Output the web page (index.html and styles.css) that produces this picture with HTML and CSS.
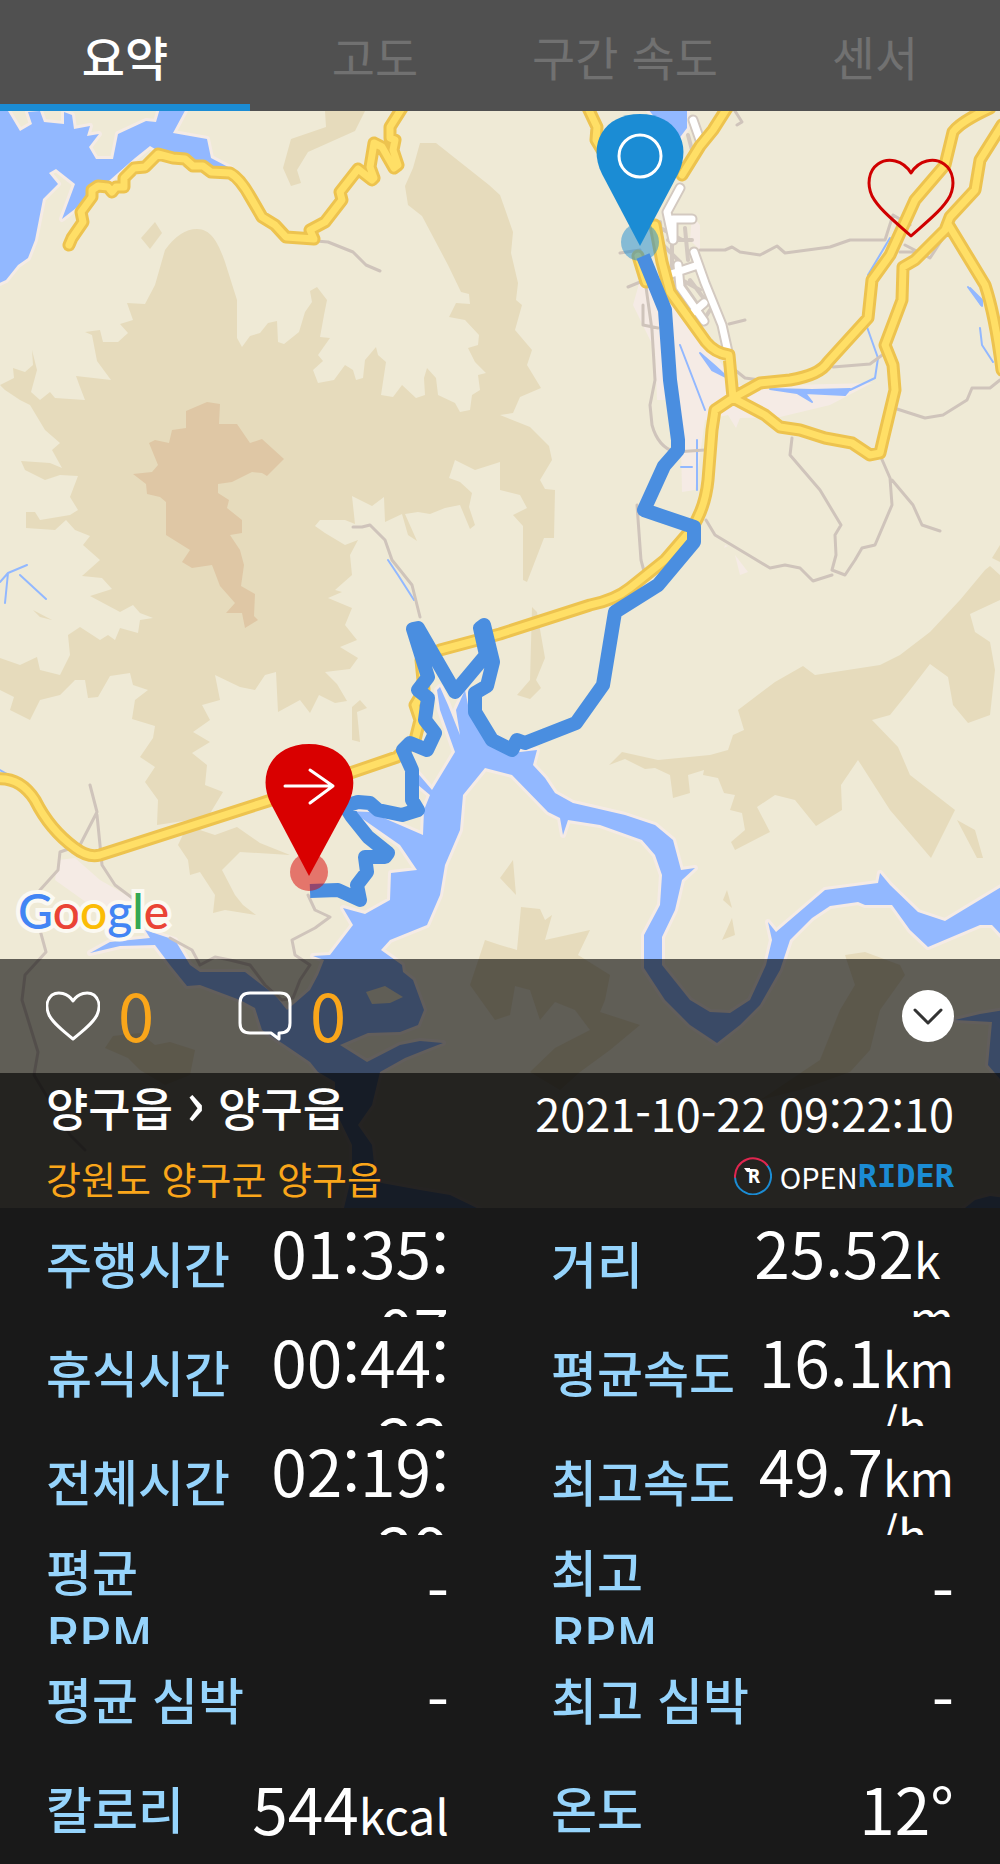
FILE: index.html
```html
<!DOCTYPE html>
<html lang="ko">
<head>
    <meta charset="UTF-8">
    <meta name="viewport" content="width=device-width, initial-scale=1.0">
    <title>OPENRIDER</title>
    <link rel="stylesheet" href="styles.css">
</head>
<body>
    <nav class="tabs">
        <button type="button" class="tab active">요약</button>
        <button type="button" class="tab">고도</button>
        <button type="button" class="tab">구간 속도</button>
        <button type="button" class="tab">센서</button>
    </nav>

    <main class="ride">
        <svg class="map" viewBox="0 111 1000 1097" preserveAspectRatio="xMidYMid slice" aria-hidden="true">
            <rect y="111" width="1000" height="1097" fill="#efead6"/>

            <!-- Terrain -->
            <g class="terrain">
                <path d="M197 229C212 229 219 245 225 262L237 300V338L242 347 250 336 260 333 268 323 277 321 278 342 284 344 299 332 305 312 312 302 310 291 317 287 327 300 324 315 320 337 330 338 318 355 323 361 313 370 318 383 334 380 345 365 353 370 356 380 363 378 365 360 376 347 378 355 386 362 381 395 393 397 402 385 416 398 425 395 424 378 427 368 436 378 438 395 455 403 460 412 470 410 472 395 480 390 478 375 486 373 475 362 468 348 478 345 479 335 465 320 449 317 456 303 470 304 469 294 461 292 448 265 422 216 408 205 405 186 413 168 420 143 436 143 489 185 500 195 506 212 513 232 511 253 518 283 516 300 522 305 515 330 532 350 527 365 541 388 520 397 513 413 500 415 530 427 549 446 552 460 540 480 545 489 555 490 554 538 544 538 527 582 523 580 523 526 513 515 527 508 520 495 500 490 500 462 475 470 455 460 449 478 460 482 472 493 469 507 475 525 470 529 460 505 445 508 430 514 418 512 405 514 417 541 408 535 402 514 385 522 384 497 372 506 352 496 355 524 345 520 320 520 315 526 325 533 345 545 358 540 350 555 352 575 335 590 342 592 328 598 352 608 345 625 357 640 340 647 358 658 350 669 325 672 337 684 347 701 335 703 319 695 310 713 300 700 278 712 276 672 265 675 255 690 240 687 215 675 220 700 202 705 210 720 193 732 210 742 192 753 207 765 205 785 223 792 200 830 215 835 237 827 260 843 290 855 240 852 222 870 235 895 243 905 256 915 225 910 213 913 215 895 200 872 190 875 188 860 178 845 190 820 157 825 158 800 145 782 155 767 140 757 153 738 155 726 132 719 135 700 148 690 133 685 130 673 110 676 98 697 88 698 85 680 75 680 60 695 40 700 30 720 10 710 14 697 0 690V658L20 665 37 657 40 670 60 675 70 655 68 635 80 627 100 640 108 635 115 640 120 628 138 633 140 620 153 618 140 613 133 605 120 612 90 596 112 589 102 578 82 576 100 560 83 545 90 536 75 530 66 520 55 530 26 528V512H35L40 520 70 515 78 510 70 497 78 476 60 475 45 480 25 470 21 461 50 463 62 468 52 450 60 443 45 430 30 405 20 400 5 390 0 385 14 378 13 368 25 372 33 365 32 350 37 370 31 392 40 400 50 392 55 398 85 400 80 387 76 376 111 380 97 361 92 335 85 332 100 330 103 342 118 342 128 333 120 324 133 320 127 303 145 304 155 285 165 250Q180 229 197 229Z"/>
                <path d="M325 111L326 127 291 139 283 168 291 186 301 183 297 170 308 152 355 131 365 111ZM155 222L162 233 150 249 141 238ZM532 607L537 612 545 658 536 680 541 688 530 699 517 695 530 680ZM352 707L360 700 367 708 357 712 360 742 352 740ZM33 610L52 620 40 617Z"/>
                <path d="M609 765L622 752 658 760 710 755 728 750 733 735 744 730 738 710 775 682 803 666 815 675 880 665 900 655 930 632 960 600 985 570 990 566 1000 575V600L970 614 975 632 990 642 995 670 990 715 968 723 953 705 948 677 930 664 910 690 890 715 872 720 898 747 910 775 955 810 931 858 890 810 858 760 841 785 842 810 816 826 795 800 775 795 757 807 770 832 735 850 731 842 745 830 742 813 730 810 735 795 724 793 718 778 703 775 704 770 688 775 690 793 673 798 670 775 655 768 645 769 625 759ZM957 820L975 830 983 858 977 858ZM1000 545L992 558 1000 562ZM513 860L516 895 500 878ZM727 890L732 908 723 900ZM732 918L735 935 722 940Z"/>
                <path d="M521 907L540 909 545 920 552 915 545 940 590 930 578 955 610 975 605 1000 600 1012 640 1025 610 1050 580 1072 560 1090 530 1072 555 1048 590 1030 575 1010 555 1002 540 1020 530 990 515 986 510 1015 495 1020 470 985 485 940 500 945 517 950ZM845 955L865 952 900 965 905 975 880 1010 870 1050 850 1072 800 1090 760 1100 820 1060 840 1010 855 985ZM113 1036L140 1033 155 1045 170 1042 195 1050 190 1075 165 1085 140 1070 128 1058 105 1048Z"/>
                <path class="peak" d="M186 411L207 402 220 404 219 424 237 424 250 443 262 439 284 459 267 476 262 473 252 472 232 482 218 484 218 493 229 500 227 508 242 520 242 533 230 535 240 550 244 565 241 586 255 594 254 616 258 620 245 628 242 613 226 613 235 603 220 586 212 565 192 568 182 562 190 550 166 535 166 502 160 497 147 494 146 484 133 474 152 472 158 465 149 443 155 440 169 443 172 430 186 428Z"/>
            </g>

            <!-- Shores -->
            <path fill="#f5ebe5" d="M640 280L665 300 700 330 735 385 790 385 872 383 830 405 780 417 740 418 736 428 728 415 705 420 695 490 682 492 680 400 657 400 655 350 633 305ZM58 860L75 858 100 880 135 900 150 930 90 905 55 880ZM692 215L700 225V250L690 240ZM735 555L748 572 740 575ZM725 545L728 546 724 548Z"/>

            <!-- Water -->
            <g class="water">
                <path d="M-5 105L8 111 20 131 32 124 28 112 40 111 44 122 64 124 64 112 72 115 74 129 90 126 87 136 99 134 89 147 96 159 113 159 118 134 146 121 156 122 161 105H188L173 133 207 139 211 158 230 168 210 172 170 158 150 146 135 158 110 180 95 190 80 205 62 219 75 184 56 169 49 173 58 184 43 199 35 240 28 258 18 265 6 280 -5 285Z"/>
                <path d="M437 690L440 687 448 705 460 735 456 710 465 690 470 715 480 730 500 739 520 752 537 750 533 765 545 778 555 793 573 803 625 815 655 825 673 840 681 870 695 868 682 880 675 910 662 937 662 965 690 1000 710 1012 730 1013 750 1000 766 965 772 940 768 922 776 932 790 920 825 890 878 883 880 873 890 885 918 912 945 921 1006 884V940L992 925 980 925 928 947 910 930 892 905 865 905 858 902 830 906 812 918 790 940 780 970 760 1005 740 1025 717 1043 690 1025 665 1000 644 968 644 935 660 905 662 875 655 855 642 840 600 825 568 820 563 835 560 818 548 812 512 775 485 768 463 795 460 830 445 865 440 895 427 925 390 940 381 950 402 965 403 972 413 980 424 1010 418 1025 400 1032 368 1033 340 1045 367 1062 400 1045 420 1041 443 1043 430 1048 405 1058 380 1072 372 1105 358 1125 372 1145 376 1182 420 1190 450 1195 485 1212H343L352 1175 352 1145 335 1110 335 1082 318 1072 310 1062 285 1045 262 1030 255 1008 240 1000 200 985 187 986 170 965 155 945 120 946 90 953 110 942 150 938 145 930 175 940 190 965 200 972 245 972 275 995 287 1010 310 990 318 975 324 960 313 956 330 955 353 925 343 908 365 914 390 900 391 873 417 870 400 845 357 815 345 811 370 812 423 835 424 810 430 795 418 785 415 770 432 790 455 752 440 710Z"/>
                <path d="M955 1020L980 1014 1005 1010V1085L988 1065 992 1022ZM960 1212L975 1200 990 1196 1005 1198V1212ZM645 105H687V128L675 144Z"/>
            </g>
            <path fill="#efead6" d="M366 992L385 986 403 997 390 1003 372 1004Z"/>
            <g class="stream">
                <path d="M680 345L705 410M697 440V490M681 467H692M868 275L890 238M867 327L878 358 875 378 850 390M968 287L981 305M980 328L982 345 993 362M0 582L8 573 27 565M8 573L5 603M20 575L46 599M388 560L398 575 414 600M0 770L28 786"/>
                <path fill="#92b8ff" d="M770 389L812 390 850 389 845 395 805 393 812 402 797 393ZM700 353L715 366 728 378 712 370ZM970 288L982 300V306Z"/>
            </g>

            <!-- Minor roads -->
            <path class="lane" d="M316 241L328 242 353 252 366 265 380 271M700 250L725 250 732 247 740 252 760 255 777 246 785 253 830 247 850 240 885 240 893 215 910 225M729 324L745 320M620 253L640 250M628 287L645 280 652 330 655 380 650 405 652 425Q658 447 675 452L705 450M643 305V325L658 328M833 367L870 364 885 353M735 370L745 378 760 380M897 409L925 418 943 415 967 400 972 388 990 388 1000 380M792 438L790 455 820 490 841 525 835 535 836 555 832 570 845 575 855 560 862 548 875 545 892 505 890 478 880 455M892 480L913 505 922 525 940 531M706 520L715 535 750 556 770 568 785 565 800 568 813 581 832 575M637 505L641 560 645 575M353 527L362 527 370 525 385 540 392 560 412 585 420 617M90 785L97 812 80 845 60 852 58 870 40 890M97 815L102 865 115 885 135 900M40 930L46 952 25 975 22 1000 38 1052 34 1075 70 1135 85 1150M308 895L315 910 330 917 315 928 292 940 295 955 310 965 300 980 293 998 282 1000 265 985 250 965 230 960 215 957 200 965 192 950 170 938M735 111L742 122 737 125M905 245L930 258 945 235M900 252L915 252"/>
            <path class="blocks" d="M655 225L682 240M658 240L680 262M685 228L688 260M672 245V268M660 222L663 262M668 240H692M690 280L705 300M684 285L700 308M682 280L700 290M710 310L705 318M688 135L692 150"/>
            <path class="street-edge" d="M693 120L700 140M680 188L667 212 673 240 673 219 692 219M694 252L705 283 722 325 728 352M668 275L698 265M678 265L680 287 704 321M690 315L704 303"/>
            <path class="street" d="M693 120L700 140M680 188L667 212 673 240 673 219 692 219M694 252L705 283 722 325 728 352M668 275L698 265M678 265L680 287 704 321M690 315L704 303"/>

            <!-- Highways: the same line twice, edge below and fill above -->
            <g class="highway-edge">
                <path id="hw" d="M69 245L72 238 83 222 81 212 92 197 92 190 98 186 108 187 112 192 116 187 124 187 124 178 134 168 145 167 158 154 173 158 185 159 193 166 203 166 211 172 230 173 Q240 178 251 198L262 217 275 225 286 237 314 239 310 230 325 222 342 200 340 192 358 169 372 180 374 178 370 167 374 143 382 147 394 168 398 165 393 150 395 140 390 138 390 127 402 108M588 108L597 127 596 140 605 155M638 256L646 282M655 225L662 262 670 292 706 342Q715 353 729 355L733 398M727 108L713 130 700 146 682 175M733 398L760 383 790 380Q820 375 828 362L868 318 872 280 890 255 915 200 945 165 953 132Q960 122 990 108M1002 125L980 160 975 190 950 217 945 230 915 260 903 267 902 300 885 345 893 365 895 390 883 440 880 453 870 455 852 443 825 438 800 430 780 427 765 415 733 398M948 224L985 285Q995 315 1002 370M733 398L715 410 712 430 708 480Q705 510 690 531L665 560 630 588Q615 600 590 605L500 634 440 650M421 660L424 690 415 705 420 720 415 740 397 757 268 801 100 855Q88 858 75 848 50 830 35 800 20 777 -3 779"/>
            </g>
            <use href="#hw" class="highway"/>

            <!-- Ride track -->
            <circle cx="640" cy="242" r="19" fill="#1b8cd4" fill-opacity=".5"/>
            <path class="track" d="M643 256L665 310 670 380 678 440 678 450 664 466 644 510 694 527 694 542 658 585 615 612 603 685 576 723 525 743 517 740 512 750 492 740 475 712 475 693 487 686 493 662 484 625 480 628 486 655 455 692 418 628 413 629 428 677 418 690 428 698 425 720 435 733 427 750 410 743 403 750 412 770 412 800 418 810 402 815 378 810 370 803 358 802 345 806 352 817 368 837 388 853 385 857 365 857 367 872 357 885 360 900 338 890 310 891"/>
            <circle cx="309" cy="872" r="19" fill="#d90000" fill-opacity=".5"/>

            <!-- Start and finish pins -->
            <g class="pin">
                <path fill="#1b8cd4" d="M640 246L602 174C587 144 604 114 640 114S693 144 678 174Z"/>
                <circle cx="640" cy="156" r="21"/>
                <path fill="#d90000" d="M309 876L271 804C256 774 273 744 309 744S363 774 348 804Z"/>
                <path d="M285 786H333M310 770L333 786 310 803"/>
            </g>
        </svg>

        <button type="button" class="favorite" aria-label="즐겨찾기">
            <svg viewBox="0 0 86 80"><path d="M43 15C35 2 20-1 10 6 0 13-1 27 4 38 11 51 25 62 43 78 61 62 75 51 82 38 87 27 86 13 76 6 66-1 51 2 43 15Z"/></svg>
        </button>

        <div class="google"><span class="g-blue">G</span><span class="g-red">o</span><span class="g-yellow">o</span><span class="g-blue">g</span><span class="g-green">l</span><span class="g-red">e</span></div>

        <div class="social">
            <button type="button" class="count" aria-label="좋아요 0">
                <svg viewBox="0 0 54 50"><path d="M27 10C22 2 12 0 6 4 0 9 0 17 3 24 7 32 17 40 27 48 37 40 47 32 51 24 54 17 54 9 48 4 42 0 32 2 27 10Z"/></svg>
                <span>0</span>
            </button>
            <button type="button" class="count" aria-label="댓글 0">
                <svg viewBox="0 0 54 50"><path d="M12 2H42Q52 2 52 12V32Q52 42 42 42H41V48L33 42H12Q2 42 2 32V12Q2 2 12 2Z"/></svg>
                <span>0</span>
            </button>
            <button type="button" class="collapse" aria-label="접기">
                <svg viewBox="0 0 52 52"><path d="M13 20L26 33 39 20"/></svg>
            </button>
        </div>

        <header class="info">
            <div class="places">
                <h1>양구읍 <span class="to">›</span> 양구읍</h1>
                <p>강원도 양구군 양구읍</p>
            </div>
            <div class="meta">
                <time datetime="2021-10-22T09:22:10">2021-10-22 09:22:10</time>
                <div class="brand">
                    <svg viewBox="0 0 38 38" aria-hidden="true">
                        <path stroke="#1b8cd4" d="M33 8A18 18 0 1 1 1 20"/>
                        <path stroke="#e0264f" d="M1 20A18 18 0 0 1 33 8"/>
                        <path fill="#fff" d="M10 11H16V15H13Z"/>
                        <text x="14" y="26">R</text>
                    </svg>
                    <span class="brand-open">OPEN</span><span class="brand-rider">RIDER</span>
                </div>
            </div>
        </header>
    </main>

    <dl class="stats">
        <div class="stat"><dt>주행시간</dt><dd><span>01:35:07</span></dd></div>
        <div class="stat"><dt>거리</dt><dd><span>25.52</span><small>k&nbsp;<wbr>m</small></dd></div>
        <div class="stat"><dt>휴식시간</dt><dd><span>00:44:22</span></dd></div>
        <div class="stat"><dt>평균속도</dt><dd><span>16.1</span><small>km&nbsp;<wbr>/h&nbsp;&nbsp;</small></dd></div>
        <div class="stat"><dt>전체시간</dt><dd><span>02:19:29</span></dd></div>
        <div class="stat"><dt>최고속도</dt><dd><span>49.7</span><small>km&nbsp;<wbr>/h&nbsp;&nbsp;</small></dd></div>
        <div class="stat"><dt>평균 RPM</dt><dd><span>-</span></dd></div>
        <div class="stat"><dt>최고 RPM</dt><dd><span>-</span></dd></div>
        <div class="stat"><dt>평균 심박</dt><dd><span>-</span></dd></div>
        <div class="stat"><dt>최고 심박</dt><dd><span>-</span></dd></div>
        <div class="stat"><dt>칼로리</dt><dd><span>544</span><small>kcal</small></dd></div>
        <div class="stat"><dt>온도</dt><dd><span>12°</span></dd></div>
    </dl>
</body>
</html>
```
FILE: styles.css
```css
* {
    margin: 0;
    padding: 0;
    box-sizing: border-box;
}

body {
    display: flex;
    flex-direction: column;
    min-height: 100vh;
    font-family: "Noto Sans CJK KR", sans-serif;
    background: #191919;
    color: white;
}

button {
    border: none;
    background: none;
    color: inherit;
    font: inherit;
    cursor: pointer;
}

svg {
    display: block;
    fill: none;
    stroke-linecap: round;
    stroke-linejoin: round;
}

/* Tabs */
.tabs {
    display: grid;
    grid-template-columns: repeat(4, 1fr);
    background: #505050;
}

.tab {
    color: #717171;
    font-size: 47px;
    line-height: 111px;
    white-space: nowrap;
}

.tab.active {
    color: white;
    font-weight: 500;
    box-shadow: inset 0 -7px #1b8cd4;
}

/* Map */
.ride {
    position: relative;
    flex: 1;
    display: flex;
    flex-direction: column;
    justify-content: flex-end;
    min-height: 700px;
}

.map {
    position: absolute;
    inset: 0;
    width: 100%;
    height: 100%;
}

.terrain {
    fill: #e6dbbc;
}

.peak {
    fill: #dfc7a5;
}

.water {
    fill: #92b8ff;
    stroke: #f5ebe5;
    stroke-width: 6px;
    paint-order: stroke;
}

.stream {
    stroke: #92b8ff;
    stroke-width: 2px;
}

.lane {
    stroke: #cfc4bb;
    stroke-width: 3px;
}

.blocks {
    stroke: #d3c9c0;
    stroke-width: 4px;
}

.street-edge {
    stroke: #d3c9c0;
    stroke-width: 11px;
}

.street {
    stroke: white;
    stroke-width: 7px;
}

.highway-edge {
    stroke: #edc34f;
    stroke-width: 13px;
}

.highway {
    stroke: #ffdf66;
    stroke-width: 7px;
}

.track {
    stroke: #4a8ee0;
    stroke-width: 14px;
    stroke-linecap: butt;
}

.pin {
    stroke: white;
    stroke-width: 3px;
}

.pin path[fill] {
    stroke: none;
}

.favorite {
    position: absolute;
    top: 47px;
    right: 46px;
}

.favorite svg {
    width: 86px;
    height: 80px;
    overflow: visible;
    stroke: #d00000;
    stroke-width: 3px;
}

.google {
    position: relative;
    padding: 0 18px;
    margin-bottom: 18px;
    font-family: Lato, sans-serif;
    font-size: 48px;
    font-weight: 500;
    line-height: 60px;
    -webkit-text-stroke: 8px #fbf9f2;
    paint-order: stroke fill;
}

.g-blue {
    color: #4285f4;
}

.g-red {
    color: #ea4335;
}

.g-yellow {
    color: #fbbc05;
}

.g-green {
    color: #34a853;
}

/* Likes and comments */
.social {
    position: relative;
    display: flex;
    align-items: center;
    gap: 84px;
    height: 114px;
    padding: 0 46px;
    background: rgba(0, 0, 0, 0.6);
}

.count {
    display: flex;
    align-items: center;
    gap: 18px;
    color: #faa61a;
    font-size: 65px;
    line-height: 110px;
}

.count span {
    padding-bottom: 4px;
}

.count svg {
    width: 54px;
    height: 50px;
    stroke: white;
    stroke-width: 3px;
}

.collapse {
    margin-left: auto;
    border-radius: 50%;
    background: white;
}

.collapse svg {
    width: 52px;
    height: 52px;
    stroke: #333;
    stroke-width: 3px;
}

/* Ride title */
.info {
    position: relative;
    display: flex;
    justify-content: space-between;
    padding: 0 46px;
    background: rgba(0, 0, 0, 0.85);
    white-space: nowrap;
}

.places h1 {
    font-size: 46px;
    font-weight: 500;
    line-height: 66px;
}

.places .to {
    font-size: 62px;
    line-height: 0;
}

.places p {
    margin-top: 9px;
    color: #faa61a;
    font-size: 38px;
    line-height: 60px;
}

.meta {
    display: flex;
    flex-direction: column;
    align-items: flex-end;
    gap: 4px;
}

.meta time {
    font-size: 45px;
    line-height: 80px;
}

.brand {
    display: flex;
    align-items: center;
    height: 38px;
    line-height: 38px;
}

.brand svg {
    width: 38px;
    height: 38px;
    margin-right: 8px;
    stroke-width: 2px;
}

.brand text {
    fill: white;
    font: bold 20px "DejaVu Sans Mono", monospace;
}

.brand-open {
    font-size: 29px;
}

.brand-rider {
    color: #1b8cd4;
    font: bold 32px/38px "DejaVu Sans Mono", monospace;
}

/* Stats */
.stats {
    display: grid;
    grid-template-columns: 1fr 1fr;
    column-gap: 102px;
    padding: 0 46px 2px;
}

/* values too long for the row wrap and are cut at its lower edge */
.stat {
    display: flex;
    align-items: safe center;
    height: 109px;
    padding-top: 4px;
    overflow: hidden;
}

.stat dt,
.stat dd {
    flex: 1 1 0;
    padding-bottom: 6px;
}

.stat dt {
    color: #96d4fc;
    font-size: 50px;
    font-weight: 500;
    line-height: 62px;
    word-break: keep-all;
}

.stat dd {
    font-size: 64px;
    line-height: 38px;
    text-align: right;
    overflow-wrap: anywhere;
}

.stat dd span {
    line-height: 78px;
}

.stat small {
    font-size: 48px;
    line-height: 52px;
}
```
